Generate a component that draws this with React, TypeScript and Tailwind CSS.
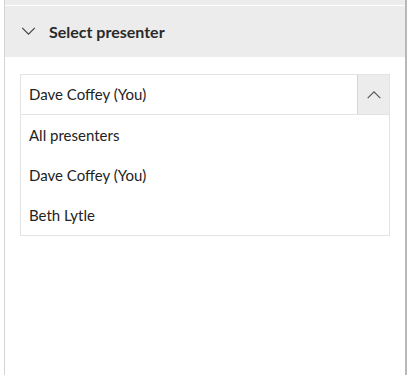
import React from 'react'

const OPTIONS = ['All presenters', 'Dave Coffey (You)', 'Beth Lytle']

function Chevron({ up, className }: { up?: boolean; className?: string }) {
  return (
    <svg viewBox="0 0 16 10" className={className} fill="none" stroke="currentColor" strokeWidth="1.3">
      {up ? <path d="M1 9 L8 2 L15 9" /> : <path d="M1 1 L8 8 L15 1" />}
    </svg>
  )
}

export default function App() {
  return (
    <div className="w-[408px] h-[375px] bg-white overflow-hidden font-['Lato',sans-serif] text-[#222]">
      <div className="ml-[4px] mr-px h-full border-l border-[#d4d4d4] border-r-2 border-r-[#b8b8b8] flex flex-col">
        <div className="h-[5px] bg-[#ececec] border-b border-white box-content" />
        <div className="h-[51px] bg-[#ececec] flex items-center pl-[16px] gap-[13px]">
          <Chevron className="w-[15px] h-[9px] text-[#444]" />
          <span className="text-[16px] font-bold text-[#2a2a2a] pt-px">Select presenter</span>
        </div>
        <div className="pt-[17px] px-[15px]">
          <div className="border border-[#e3e3e3]">
            <div className="flex h-[40px] border-b border-[#e3e3e3]">
              <div className="flex-1 flex items-center pl-[8px] text-[15px]">Dave Coffey (You)</div>
              <div className="w-[32px] bg-[#ececec] border-l border-[#d6d6d6] flex items-center justify-center">
                <Chevron up className="w-[16px] h-[9px] text-[#555]" />
              </div>
            </div>
            {OPTIONS.map((o) => (
              <div key={o} className="h-[40px] flex items-center pl-[8px] text-[15px]">
                {o}
              </div>
            ))}
          </div>
        </div>
      </div>
    </div>
  )
}
